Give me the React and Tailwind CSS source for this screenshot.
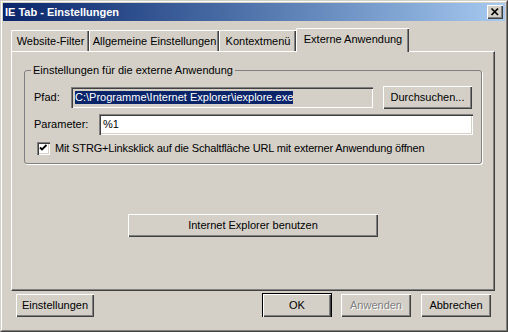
import React from 'react';

const raised = "shadow-[inset_1px_1px_0_#fff,inset_-1px_-1px_0_#404040,inset_-2px_-2px_0_#808080]";
const sunken = "shadow-[inset_1px_1px_0_#808080,inset_2px_2px_0_#404040,inset_-1px_-1px_0_#fff,inset_-2px_-2px_0_#d4d0c8]";

const Button = ({ children, className = '', disabled = false }) => (
  <div
    className={`flex items-center justify-center h-[23px] bg-[#d4d0c8] ${raised} ${disabled ? "text-[#808080] [text-shadow:1px_1px_0_#fff]" : ''} ${className}`}
  >
    {children}
  </div>
);

const Tab = ({ label, width, active = false }) => {
  if (active) {
    return (
      <div
        className={`relative z-10 h-[24px] mb-[-1px] flex justify-center pt-[4px] bg-[#d4d0c8] border-t border-l border-white rounded-tl-[2px] shadow-[inset_-1px_0_0_#404040,inset_-2px_0_0_#808080] ${width}`}
      >
        {label}
      </div>
    );
  }
  return (
    <div
      className={`h-[21px] flex justify-center pt-[4px] bg-[#d4d0c8] border-t border-l border-white rounded-tl-[2px] shadow-[inset_-1px_0_0_#404040,inset_-2px_0_0_#808080] ${width}`}
    >
      {label}
    </div>
  );
};

export default function App() {
  return (
    <div className="w-[508px] h-[332px] bg-[#d4d0c8] border border-t-[#d4d0c8] border-l-[#d4d0c8] border-r-[#404040] border-b-[#404040] font-['Liberation_Sans',Arial,sans-serif] text-[11px] leading-[13px] text-black">
      <div className="h-full border border-t-white border-l-white border-r-[#808080] border-b-[#808080] p-px flex flex-col">
        {/* Title bar */}
        <div className="h-[18px] flex items-center justify-between pl-[2px] pr-[2px] bg-gradient-to-r from-[#0a246a] to-[#a6caf0]">
          <span className="text-white font-bold text-[11px]">IE Tab - Einstellungen</span>
          <div className={`w-[16px] h-[14px] bg-[#d4d0c8] ${raised} flex items-center justify-center`}>
            <svg width="16" height="14" viewBox="0 0 16 14">
              <path d="M4.5 3.5 L11 10 M11 3.5 L4.5 10" stroke="#000" strokeWidth="1.7" fill="none" />
            </svg>
          </div>
        </div>

        {/* Tabs */}
        <div className="pl-[8px] pr-[10px]">
          <div className="mt-[7px] h-[23px] flex items-end">
            <Tab label="Website-Filter" width="w-[78px]" />
            <Tab label="Allgemeine Einstellungen" width="w-[130px]" />
            <Tab label="Kontextmenü" width="w-[77px]" />
            <Tab label="Externe Anwendung" width="w-[113px]" active />
          </div>

          {/* Panel */}
          <div className="h-[240px] border-t border-l border-white border-r border-b border-r-[#404040] border-b-[#404040] shadow-[inset_-1px_-1px_0_#808080] flex flex-col px-[12px]">
            <fieldset className="mt-[12px] border border-[#808080] rounded-[3px] shadow-[1px_1px_0_#fff] pl-[9px] pr-[8px] pb-[8px]">
              <legend className="-ml-[3px] px-[2px] bg-[#d4d0c8]">Einstellungen für die externe Anwendung</legend>

              <div className="mt-[9px] h-[23px] flex items-center">
                <span className="w-[37px]">Pfad:</span>
                <div className={`w-[302px] h-[21px] bg-[#d4d0c8] ${sunken} flex items-center pl-[4px]`}>
                  <span className="bg-[#0a246a] text-white leading-[13px] whitespace-nowrap">
                    {"C:\\Programme\\Internet Explorer\\iexplore.exe"}
                  </span>
                </div>
                <Button className="ml-[10px] w-[89px]">Durchsuchen...</Button>
              </div>

              <div className="mt-[5px] h-[21px] flex items-center">
                <span className="w-[65px]">Parameter:</span>
                <div className={`flex-1 h-[21px] bg-white ${sunken} flex items-center pl-[4px]`}>%1</div>
              </div>

              <div className="mt-[7px] h-[13px] flex items-center">
                <div className={`ml-[3px] w-[13px] h-[13px] bg-white ${sunken}`}>
                  <svg width="13" height="13" viewBox="0 0 13 13">
                    <path d="M3 5.5 L5 7.5 L9.5 3" stroke="#000" strokeWidth="1.8" fill="none" />
                  </svg>
                </div>
                <span className="ml-[5px] whitespace-nowrap tracking-[-0.15px]">Mit STRG+Linksklick auf die Schaltfläche URL mit externer Anwendung öffnen</span>
              </div>
            </fieldset>

            <div className="mt-[50px] flex justify-center">
              <Button className="w-[250px]">Internet Explorer benutzen</Button>
            </div>
          </div>

          {/* Bottom buttons */}
          <div className="mt-[2px] flex items-center pl-[5px] pr-[4px]">
            <Button className="w-[78px]">Einstellungen</Button>
            <div className="ml-auto w-[70px] h-[24px] border border-black">
              <Button className="w-full h-[22px]">OK</Button>
            </div>
            <Button className="ml-[9px] w-[70px]" disabled>Anwenden</Button>
            <Button className="ml-[10px] w-[70px]">Abbrechen</Button>
          </div>
        </div>
      </div>
    </div>
  );
}
